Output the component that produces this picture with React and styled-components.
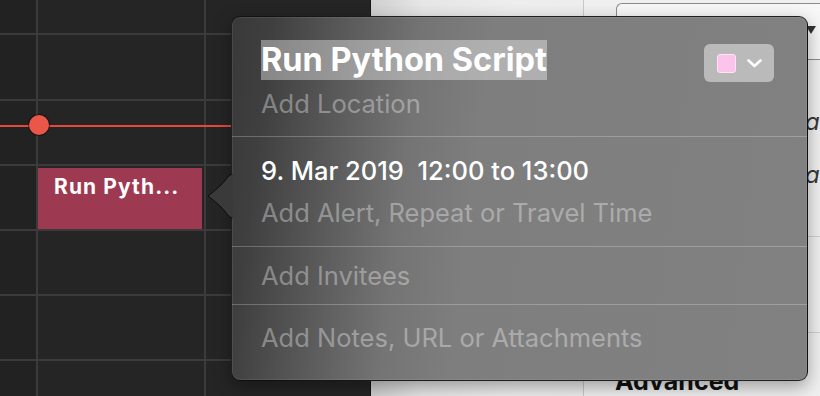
import React from 'react'
import styled, { createGlobalStyle } from 'styled-components'

const GlobalStyle = createGlobalStyle`
  html, body {
    margin: 0;
    padding: 0;
    background: #ececec;
    overflow: hidden;
  }
  body {
    font-family: Inter, "Noto Sans", "Liberation Sans", sans-serif;
    -webkit-font-smoothing: antialiased;
  }
`

const Page = styled.div`
  position: relative;
  display: flex;
  width: 820px;
  height: 396px;
  overflow: hidden;
`

// dark day view on the left
const Calendar = styled.div`
  position: relative;
  width: 370px;
  flex: none;
  display: grid;
  grid-template-columns: 36px 166px 1fr;
  grid-template-rows: 33px 64px 63px 63px 63px 63px 1fr;
  gap: 2px;
  background: #3b3b3b;
  border-right: 1px solid #141414;
`

const Cell = styled.div`
  background: ${p => (p.gutter ? '#222222' : '#252525')};
  display: flex;
`

const Event = styled.div`
  flex: 1;
  margin: 2px 2px 0 0;
  background: #9e3952;
  color: #fff;
  font-weight: 700;
  font-size: 21px;
  letter-spacing: 1.1px;
  padding: 6px 0 0 16px;
  white-space: nowrap;
`

const NowLine = styled.div`
  position: absolute;
  left: 0;
  right: 0;
  top: 125px;
  height: 2px;
  background: #e4493b;
`

const NowDot = styled.div`
  position: absolute;
  left: 29px;
  top: 115px;
  width: 20px;
  height: 20px;
  border-radius: 50%;
  background: #ea5647;
  box-shadow: 0 0 0 1px rgba(0, 0, 0, 0.45);
`

// light panels on the right
const Sidebar = styled.div`
  flex: 1;
  display: flex;
  background: linear-gradient(to right, #cfcfcf 0px, #e6e6e6 50px, #eeeeee 140px, #ededed);
`

const SidePane = styled.div`
  width: 212px;
  border-right: 1px solid #c9c9c9;
`

const Inspector = styled.div`
  flex: 1;
  display: flex;
  flex-direction: column;
  background: #f0f0f0;
`

const PopupBox = styled.div`
  margin: 3px 0 0 32px;
  height: 57px;
  flex: none;
  border: 1.5px solid #8c8c8c;
  border-right: none;
  border-radius: 6px 0 0 6px;
  display: flex;
  justify-content: flex-end;
  padding: 22px 4px 0 0;
  box-sizing: border-box;
  background: #f7f7f7;
`

const Caret = styled.div`
  width: 0;
  height: 0;
  border-left: 5px solid transparent;
  border-right: 5px solid transparent;
  border-top: 8px solid #333;
`

const FieldRow = styled.div`
  margin-top: ${p => p.top}px;
  height: 30px;
  line-height: 30px;
  flex: none;
  padding-left: 221px;
  font-size: 24px;
  font-style: italic;
  color: #383838;
  white-space: nowrap;
`

const ListRow = styled.div`
  height: ${p => p.h}px;
  flex: none;
  border-bottom: 1px solid #d0d0d0;
`

const SectionTitle = styled.div`
  padding: 33px 0 0 31px;
  font-size: 25px;
  line-height: 30px;
  font-weight: 700;
  color: #111;
  white-space: nowrap;
`

// event popover
const Popover = styled.div`
  position: absolute;
  left: 231px;
  top: 16px;
  width: 577px;
  height: 365px;
  box-sizing: border-box;
  border-radius: 9px;
  border: 1px solid rgba(0, 0, 0, 0.75);
  background: linear-gradient(97deg, #393939 0px, #3f3f3f 40px, #5c5c5c 120px, #747474 190px, #7e7e7e 260px, #818181 100%);
  box-shadow: inset 0 0 0 1px rgba(255, 255, 255, 0.08), 0 6px 18px rgba(0, 0, 0, 0.35);
  display: flex;
  flex-direction: column;
`

const Arrow = styled.svg`
  position: absolute;
  left: -25px;
  top: 156px;
`

const Section = styled.div`
  display: flex;
  flex-direction: column;
  gap: ${p => p.gap || 0}px;
  padding: ${p => p.pad};
  border-bottom: ${p => (p.last ? 'none' : '1px solid rgba(255, 255, 255, 0.24)')};
`

const TitleRow = styled.div`
  display: flex;
  align-items: center;
  justify-content: space-between;
  padding-right: 33px;
  height: 40px;
`

const Title = styled.span`
  font-size: 32.5px;
  font-weight: 700;
  color: #fff;
  line-height: 40px;
  background: rgba(255, 255, 255, 0.38);
`

const ColorButton = styled.div`
  width: 70px;
  height: 38px;
  margin-top: 6px;
  border-radius: 6px;
  background: rgba(255, 255, 255, 0.46);
  display: flex;
  align-items: center;
  justify-content: center;
  gap: 11px;
`

const Swatch = styled.div`
  width: 17px;
  height: 17px;
  border-radius: 3px;
  background: #fcc3ec;
  border: 1.5px solid #ffe3f6;
`

const Line = styled.div`
  font-size: 25.5px;
  line-height: 30px;
  height: 30px;
  white-space: nowrap;
  color: ${p => (p.value ? '#ffffff' : 'rgba(255, 255, 255, 0.36)')};
  font-weight: ${p => (p.value ? 500 : 400)};
`

export default function App() {
  const cells = Array.from({ length: 21 }, (_, i) => i)

  return (
    <Page>
      <GlobalStyle />
      <Calendar>
        {cells.map(i => (
          <Cell key={i} gutter={i % 3 === 0}>
            {i === 10 && <Event>Run Pyth...</Event>}
          </Cell>
        ))}
        <NowLine />
        <NowDot />
      </Calendar>

      <Sidebar>
        <SidePane />
        <Inspector>
          <PopupBox>
            <Caret />
          </PopupBox>
          <FieldRow top={47}>a</FieldRow>
          <FieldRow top={23}>a</FieldRow>
          <ListRow h={46} />
          <ListRow h={95} />
          <SectionTitle>Advanced</SectionTitle>
        </Inspector>
      </Sidebar>

      <Popover>
        <Arrow width="26" height="46" viewBox="0 0 26 46">
          <path
            d="M26 1 C22 1 20 6 14 12 C10 16 5 20 1 23 C5 26 10 30 14 34 C20 40 22 45 26 45 Z"
            fill="#3a3a3a"
            stroke="rgba(0,0,0,0.75)"
            strokeWidth="1"
          />
          <rect x="25" y="0" width="2" height="46" fill="#3a3a3a" />
        </Arrow>

        <Section pad="23px 0 17px 29px" gap={9}>
          <TitleRow>
            <Title>Run Python Script</Title>
            <ColorButton>
              <Swatch />
              <svg width="15" height="9" viewBox="0 0 15 9">
                <path d="M1.5 1.5 L7.5 7 L13.5 1.5" fill="none" stroke="#fff" strokeWidth="2.6" strokeLinecap="round" strokeLinejoin="round" />
              </svg>
            </ColorButton>
          </TitleRow>
          <Line>Add Location</Line>
        </Section>

        <Section pad="19px 0 18px 29px" gap={12}>
          <Line value>9. Mar 2019&nbsp; 12:00 to 13:00</Line>
          <Line>Add Alert, Repeat or Travel Time</Line>
        </Section>

        <Section pad="14px 0 13px 29px">
          <Line>Add Invitees</Line>
        </Section>

        <Section pad="18px 0 0 29px" last>
          <Line>Add Notes, URL or Attachments</Line>
        </Section>
      </Popover>
    </Page>
  )
}
